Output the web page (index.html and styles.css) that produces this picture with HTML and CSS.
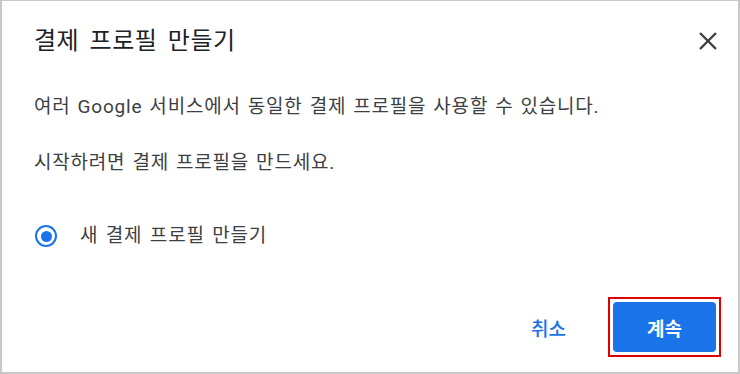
FILE: index.html
```html
<!DOCTYPE html>
<html lang="ko">
<head>
  <meta charset="UTF-8">
  <title>결제 프로필 만들기</title>
  <link rel="stylesheet" href="styles.css">
</head>
<body>

  <div class="dialogo">
    <div class="cabecera">
      <h1 class="titulo">결제 프로필 만들기</h1>
      <button class="cerrar" aria-label="닫기">
        <svg width="20" height="20" viewBox="0 0 20 20">
          <path d="M2 2 L18 18 M18 2 L2 18" stroke="#3c4043" stroke-width="2.4" fill="none"/>
        </svg>
      </button>
    </div>

    <div class="contenido">
      <p>여러 Google 서비스에서 동일한 결제 프로필을 사용할 수 있습니다.</p>
      <p>시작하려면 결제 프로필을 만드세요.</p>

      <label class="opcion">
        <span class="radio"><span class="punto"></span></span>
        새 결제 프로필 만들기
      </label>
    </div>

    <div class="acciones">
      <button class="btn-texto">취소</button>
      <div class="resaltado">
        <button class="btn-principal">계속</button>
      </div>
    </div>
  </div>

</body>
</html>
```

FILE: styles.css
```css
* { box-sizing: border-box; }

body {
  margin: 0;
  font-family: Roboto, 'Noto Sans CJK KR', sans-serif;
  background: #fff;
}

.dialogo {
  width: 740px;
  height: 374px;
  border: 2px solid #c8c8c8;
  border-top-width: 1px;
  background: #fff;
  display: flex;
  flex-direction: column;
}

.cabecera {
  display: flex;
  justify-content: space-between;
  align-items: center;
  padding: 24px 20px 0 32px;
}

.titulo {
  margin: 0;
  font-size: 24px;
  line-height: 32px;
  font-weight: 400;
  color: #202124;
  word-spacing: 4px;
  letter-spacing: 0.5px;
}

.cerrar {
  background: none;
  border: none;
  padding: 0;
  width: 20px;
  height: 20px;
  cursor: pointer;
}

.contenido {
  padding: 36px 32px 0 32px;
  color: #3c4043;
  font-size: 19px;
  letter-spacing: 0.8px;
}

.contenido p {
  margin: 0 0 28px 0;
  line-height: 28px;
  word-spacing: 1.5px;
}

.opcion {
  display: flex;
  align-items: center;
  gap: 23px;
  margin-top: 45px;
  line-height: 28px;
  word-spacing: 2px;
}

.radio {
  width: 22px;
  height: 22px;
  border: 2.5px solid #1a73e8;
  border-radius: 50%;
  display: flex;
  align-items: center;
  justify-content: center;
  margin-left: 1px;
}

.punto {
  width: 11px;
  height: 11px;
  border-radius: 50%;
  background: #1a73e8;
}

.acciones {
  display: flex;
  justify-content: flex-end;
  align-items: center;
  gap: 42px;
  padding: 0 17px 0 0;
  margin-top: auto;
  margin-bottom: 15px;
}

.btn-texto {
  background: none;
  border: none;
  color: #1a73e8;
  font-family: inherit;
  font-size: 19px;
  font-weight: 500;
  padding: 0;
  cursor: pointer;
}

.resaltado {
  border: 2px solid #e00000;
  padding: 3px;
}

.btn-principal {
  display: block;
  width: 103px;
  height: 50px;
  background: #1a73e8;
  color: #fff;
  border: none;
  border-radius: 4px;
  font-family: inherit;
  font-size: 19px;
  font-weight: 700;
  cursor: pointer;
}
```
